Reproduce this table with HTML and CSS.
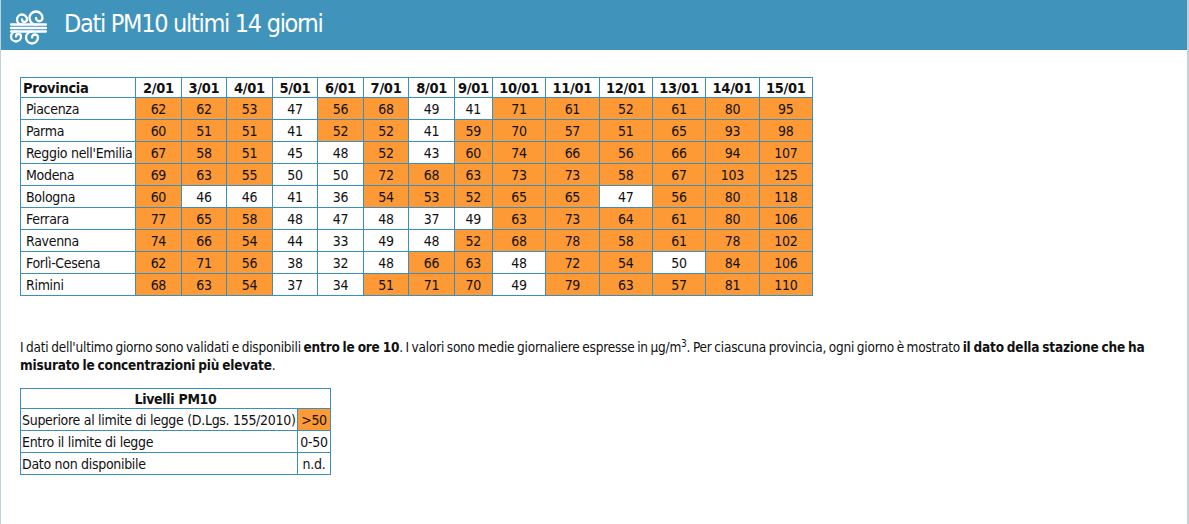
FILE: index.html
```html
<!DOCTYPE html>
<html lang="it">
<head>
<meta charset="utf-8">
<title>Dati PM10 ultimi 14 giorni</title>
<link rel="stylesheet" href="styles.css">
</head>
<body>
<div class="page">
  <header class="bar">
    <svg class="icon" width="50" height="50" viewBox="0 0 50 50" fill="none" stroke="#fff" stroke-width="2.3" stroke-linecap="round" stroke-linejoin="round">
      <path d="M21 24.5 A5 5 0 1 1 26 19.5 A2.5 2.5 0 0 1 21 19.5"/>
      <path d="M35 24.5 A6.5 6.5 0 1 1 41.5 18 A3.25 3.25 0 0 1 35 18"/>
      <path d="M10 24.5 H45"/>
      <path d="M10 28 H45"/>
      <path d="M10 31.5 H45"/>
      <path d="M15 31.5 A5 5 0 1 0 20 36.5 A2.5 2.5 0 0 0 15 36.5"/>
      <path d="M31 31.5 A6 6 0 1 0 37 37.5 A3 3 0 0 0 31 37.5"/>
    </svg>
    <h1 class="title">Dati PM10 ultimi 14 giorni</h1>
  </header>
  <main class="content">
    <table class="data">
      <colgroup>
        <col class="c-prov">
        <col class="c-s"><col class="c-s"><col class="c-s"><col class="c-s"><col class="c-s"><col class="c-s"><col class="c-s"><col class="c-s9">
        <col class="c-w"><col class="c-w"><col class="c-w"><col class="c-w"><col class="c-w"><col class="c-w">
      </colgroup>
      <thead>
        <tr><th class="prov">Provincia</th><th>2/01</th><th>3/01</th><th>4/01</th><th>5/01</th><th>6/01</th><th>7/01</th><th>8/01</th><th>9/01</th><th>10/01</th><th>11/01</th><th>12/01</th><th>13/01</th><th>14/01</th><th>15/01</th></tr>
      </thead>
      <tbody>
        <tr><td class="prov">Piacenza</td><td class="o">62</td><td class="o">62</td><td class="o">53</td><td>47</td><td class="o">56</td><td class="o">68</td><td>49</td><td>41</td><td class="o">71</td><td class="o">61</td><td class="o">52</td><td class="o">61</td><td class="o">80</td><td class="o">95</td></tr>
        <tr><td class="prov">Parma</td><td class="o">60</td><td class="o">51</td><td class="o">51</td><td>41</td><td class="o">52</td><td class="o">52</td><td>41</td><td class="o">59</td><td class="o">70</td><td class="o">57</td><td class="o">51</td><td class="o">65</td><td class="o">93</td><td class="o">98</td></tr>
        <tr><td class="prov">Reggio nell'Emilia</td><td class="o">67</td><td class="o">58</td><td class="o">51</td><td>45</td><td>48</td><td class="o">52</td><td>43</td><td class="o">60</td><td class="o">74</td><td class="o">66</td><td class="o">56</td><td class="o">66</td><td class="o">94</td><td class="o">107</td></tr>
        <tr><td class="prov">Modena</td><td class="o">69</td><td class="o">63</td><td class="o">55</td><td>50</td><td>50</td><td class="o">72</td><td class="o">68</td><td class="o">63</td><td class="o">73</td><td class="o">73</td><td class="o">58</td><td class="o">67</td><td class="o">103</td><td class="o">125</td></tr>
        <tr><td class="prov">Bologna</td><td class="o">60</td><td>46</td><td>46</td><td>41</td><td>36</td><td class="o">54</td><td class="o">53</td><td class="o">52</td><td class="o">65</td><td class="o">65</td><td>47</td><td class="o">56</td><td class="o">80</td><td class="o">118</td></tr>
        <tr><td class="prov">Ferrara</td><td class="o">77</td><td class="o">65</td><td class="o">58</td><td>48</td><td>47</td><td>48</td><td>37</td><td>49</td><td class="o">63</td><td class="o">73</td><td class="o">64</td><td class="o">61</td><td class="o">80</td><td class="o">106</td></tr>
        <tr><td class="prov">Ravenna</td><td class="o">74</td><td class="o">66</td><td class="o">54</td><td>44</td><td>33</td><td>49</td><td>48</td><td class="o">52</td><td class="o">68</td><td class="o">78</td><td class="o">58</td><td class="o">61</td><td class="o">78</td><td class="o">102</td></tr>
        <tr><td class="prov">Forlì-Cesena</td><td class="o">62</td><td class="o">71</td><td class="o">56</td><td>38</td><td>32</td><td>48</td><td class="o">66</td><td class="o">63</td><td>48</td><td class="o">72</td><td class="o">54</td><td>50</td><td class="o">84</td><td class="o">106</td></tr>
        <tr><td class="prov">Rimini</td><td class="o">68</td><td class="o">63</td><td class="o">54</td><td>37</td><td>34</td><td class="o">51</td><td class="o">71</td><td class="o">70</td><td>49</td><td class="o">79</td><td class="o">63</td><td class="o">57</td><td class="o">81</td><td class="o">110</td></tr>
      </tbody>
    </table>

    <p class="note">I dati dell'ultimo giorno sono validati e disponibili <b>entro le ore 10</b>. I valori sono medie giornaliere espresse in μg/m<sup>3</sup>. Per ciascuna provincia, ogni giorno è mostrato <b>il dato della stazione che ha misurato le concentrazioni più elevate</b>.</p>

    <table class="legend">
      <thead>
        <tr><th colspan="2">Livelli PM10</th></tr>
      </thead>
      <tbody>
        <tr><td class="lbl">Superiore al limite di legge (D.Lgs. 155/2010)</td><td class="val o">&gt;50</td></tr>
        <tr><td class="lbl">Entro il limite di legge</td><td class="val">0-50</td></tr>
        <tr><td class="lbl">Dato non disponibile</td><td class="val">n.d.</td></tr>
      </tbody>
    </table>
  </main>
</div>
</body>
</html>
```

FILE: styles.css
```css
html, body {
  margin: 0;
  padding: 0;
  background: #fff;
}
body {
  font-family: "DejaVu Sans Condensed", "Liberation Sans", sans-serif;
  color: #111;
}
.page {
  width: 1186px;
  height: 524px;
  border-left: 1px solid #c3d2d8;
  border-right: 2px solid #c3d2d8;
  box-sizing: content-box;
}
.bar {
  height: 50px;
  background: #4094bb;
  display: flex;
  align-items: center;
  gap: 13px;
}
.icon {
  display: block;
  flex: none;
}
.title {
  margin: 0;
  color: #fff;
  font-weight: normal;
  font-size: 25px;
  letter-spacing: -1.3px;
  line-height: 1;
  padding-bottom: 3px;
}
.content {
  padding: 27px 0 0 19px;
}
.data {
  border-collapse: collapse;
  table-layout: fixed;
  width: 793px;
  font-size: 14px;
  letter-spacing: -0.3px;
}
.c-prov { width: 115px; }
.c-s { width: 45.5px; }
.c-s9 { width: 38px; }
.c-w { width: 53.3px; }
.data th, .data td {
  border: 1px solid #3b8fbf;
  text-align: center;
  padding: 0;
  white-space: nowrap;
  overflow: hidden;
}
.data th {
  height: 19px;
  font-weight: bold;
  font-size: 14.5px;
}
.data td {
  height: 21px;
}
.data th.prov {
  text-align: left;
  padding-left: 2px;
}
.data td.prov {
  text-align: left;
  padding-left: 5px;
}
.o {
  background: #fd9a35;
}
.note {
  margin: 42px 0 0 0;
  width: 1165px;
  font-size: 13.5px;
  letter-spacing: -0.2px;
  word-spacing: -1px;
  line-height: 18px;
}
.note sup {
  font-size: 10px;
  line-height: 0;
}
.legend {
  margin-top: 14px;
  border-collapse: collapse;
  font-size: 14px;
  letter-spacing: -0.3px;
}
.legend th, .legend td {
  border: 1px solid #3b8fbf;
  padding: 0 1px;
  height: 21px;
  white-space: nowrap;
}
.legend th {
  font-weight: bold;
  text-align: center;
  height: 19px;
}
.legend td.lbl {
  text-align: left;
  width: 274px;
}
.legend td.val {
  text-align: center;
  width: 30px;
}
```
